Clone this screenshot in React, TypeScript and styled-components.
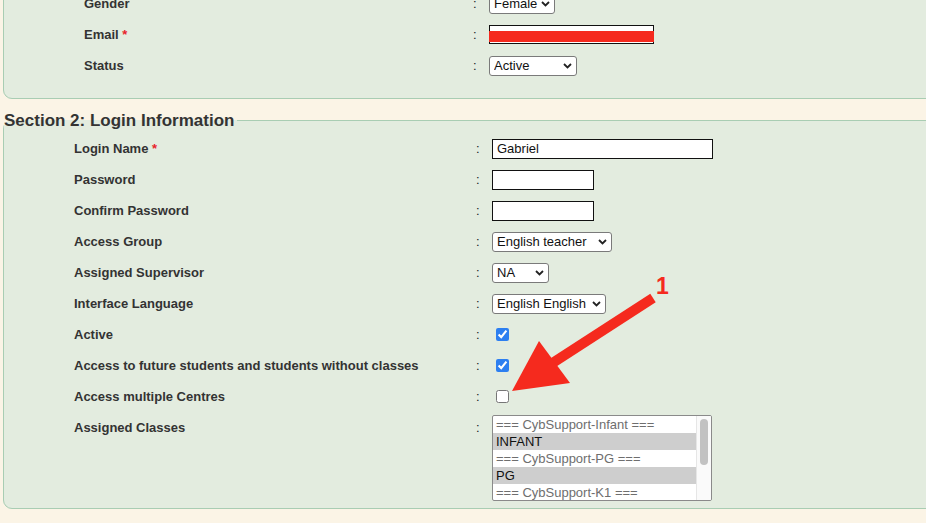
import React from 'react';
import styled, { createGlobalStyle } from 'styled-components';

const GlobalStyle = createGlobalStyle`
  html, body {
    margin: 0;
    padding: 0;
    background: #fbf4e6;
    overflow: hidden;
  }
  body {
    font-family: "Liberation Sans", Arial, Helvetica, sans-serif;
    font-size: 13px;
    color: #333;
  }
`;

const Page = styled.div`
  display: flow-root;
  position: relative;
  width: 926px;
  height: 523px;
  overflow: hidden;
`;

const Fieldset = styled.fieldset`
  margin: 0 -40px 0 3px;
  border: 1px solid #a9cdb3;
  border-radius: 9px;
  background: #e3ecdf;
  min-width: 0;
`;

const PersonalSection = styled(Fieldset)`
  margin-top: -13px;
  padding: 0 0 17px 0;
`;

const LoginSection = styled(Fieldset)`
  margin-top: 11px;
  padding: 2px 0 7px 0;
`;

const Legend = styled.legend`
  padding: 0 3px 0 0;
  font-size: 17px;
  line-height: 21px;
  font-weight: bold;
  color: #333;
`;

const FormGrid = styled.div<{ $indent: number; $labelWidth: number; $colonWidth: number }>`
  display: grid;
  grid-template-columns: ${(p) => p.$labelWidth}px ${(p) => p.$colonWidth}px 1fr;
  grid-auto-rows: minmax(31px, auto);
  align-items: center;
  padding-left: ${(p) => p.$indent}px;
`;

const Label = styled.div<{ $top?: boolean }>`
  font-weight: bold;
  color: #333;
  white-space: nowrap;
  align-self: ${(p) => (p.$top ? 'start' : 'center')};
  line-height: ${(p) => (p.$top ? '31px' : 'normal')};
`;

const Star = styled.span`
  color: #e8242b;
`;

const Colon = styled(Label)`
  font-weight: normal;
  color: #222;
`;

const Field = styled.div<{ $top?: boolean }>`
  display: flex;
  align-items: center;
  align-self: ${(p) => (p.$top ? 'start' : 'center')};
  margin-top: ${(p) => (p.$top ? '3px' : '0')};
`;

const TallRow = styled.div`
  display: contents;
`;

const TextInput = styled.input<{ $width: number }>`
  box-sizing: border-box;
  width: ${(p) => p.$width}px;
  height: 20px;
  margin: 0;
  padding: 0 4px;
  border: 1px solid #111;
  border-radius: 0;
  background: #fff;
  font-family: "Liberation Sans", Arial, sans-serif;
  font-size: 13px;
  color: #111;
  outline: none;
`;

const RedactWrap = styled.div`
  position: relative;
  display: inline-flex;
`;

const RedactBar = styled.div`
  position: absolute;
  left: 0;
  right: 0;
  top: 6px;
  height: 11px;
  background: #f52a1e;
`;

const SelectWrap = styled.div`
  position: relative;
  display: inline-flex;
`;

const NativeSelect = styled.select<{ $width: number }>`
  appearance: none;
  box-sizing: border-box;
  width: ${(p) => p.$width}px;
  height: 20px;
  margin: 0;
  padding: 0 16px 0 4px;
  border: 1px solid #7a7a7a;
  border-radius: 3px;
  background: #fff;
  font-family: "Liberation Sans", Arial, sans-serif;
  font-size: 13px;
  color: #111;
  outline: none;
`;

const Chevron = styled.svg`
  position: absolute;
  right: 5px;
  top: 7px;
  width: 9px;
  height: 6px;
  pointer-events: none;
`;

const Check = styled.input`
  width: 13px;
  height: 13px;
  margin: 0 0 0 4px;
  accent-color: #2d7ff0;
`;

const ListBox = styled.div`
  box-sizing: border-box;
  display: flex;
  width: 220px;
  height: 86px;
  border: 1px solid #8a8a8a;
  border-radius: 2px;
  background: #fff;
  overflow: hidden;
`;

const OptionList = styled.div`
  flex: 1;
  padding-top: 0;
`;

const ListOption = styled.div<{ $group?: boolean; $selected?: boolean }>`
  height: 17px;
  line-height: 17px;
  padding-left: 3px;
  font-size: 13px;
  white-space: nowrap;
  color: ${(p) => (p.$group ? '#6e6e6e' : '#111')};
  background: ${(p) => (p.$selected ? '#cecece' : 'transparent')};
`;

const ScrollTrack = styled.div`
  width: 14px;
  border-left: 1px solid #e6e6e6;
  background: #fafafa;
  display: flex;
  justify-content: center;
  padding-top: 3px;
`;

const ScrollThumb = styled.div`
  width: 8px;
  height: 46px;
  border-radius: 4px;
  background: #c2c2c2;
`;

const Overlay = styled.svg`
  position: absolute;
  left: 0;
  top: 0;
  width: 926px;
  height: 523px;
  pointer-events: none;
`;

const Marker = styled.div`
  position: absolute;
  left: 656px;
  top: 275px;
  font-size: 23px;
  line-height: 1;
  font-weight: bold;
  color: #f52a1e;
`;

const Select: React.FC<{ width: number; value: string; options: string[] }> = ({ width, value, options }) => (
  <SelectWrap>
    <NativeSelect $width={width} defaultValue={value}>
      {options.map((o) => (
        <option key={o}>{o}</option>
      ))}
    </NativeSelect>
    <Chevron viewBox="0 0 9 6">
      <path d="M1 1 L4.5 4.5 L8 1" fill="none" stroke="#222" strokeWidth="1.8" />
    </Chevron>
  </SelectWrap>
);

interface Row {
  label: string;
  required?: boolean;
  field: React.ReactNode;
}

const personalRows: Row[] = [
  { label: 'Gender', field: <Select width={66} value="Female" options={['Male', 'Female']} /> },
  {
    label: 'Email',
    required: true,
    field: (
      <RedactWrap>
        <TextInput $width={165} style={{ height: 19 }} />
        <RedactBar />
      </RedactWrap>
    ),
  },
  { label: 'Status', field: <Select width={88} value="Active" options={['Active', 'Inactive']} /> },
];

const loginRows: Row[] = [
  { label: 'Login Name', required: true, field: <TextInput $width={221} defaultValue="Gabriel" /> },
  { label: 'Password', field: <TextInput $width={102} type="password" /> },
  { label: 'Confirm Password', field: <TextInput $width={102} type="password" /> },
  {
    label: 'Access Group',
    field: <Select width={120} value="English teacher" options={['English teacher', 'Admin']} />,
  },
  { label: 'Assigned Supervisor', field: <Select width={57} value="NA" options={['NA']} /> },
  {
    label: 'Interface Language',
    field: <Select width={114} value="English English" options={['English English']} />,
  },
  { label: 'Active', field: <Check type="checkbox" defaultChecked /> },
  {
    label: 'Access to future students and students without classes',
    field: <Check type="checkbox" defaultChecked />,
  },
  { label: 'Access multiple Centres', field: <Check type="checkbox" /> },
];

const classes = [
  { text: '=== CybSupport-Infant ===', group: true },
  { text: 'INFANT', selected: true },
  { text: '=== CybSupport-PG ===', group: true },
  { text: 'PG', selected: true },
  { text: '=== CybSupport-K1 ===', group: true },
];

const renderRows = (rows: Row[]) =>
  rows.map((r) => (
    <React.Fragment key={r.label}>
      <Label>
        {r.label}
        {r.required && <Star> *</Star>}
      </Label>
      <Colon>:</Colon>
      <Field>{r.field}</Field>
    </React.Fragment>
  ));

const App: React.FC = () => {
  return (
    <Page>
      <GlobalStyle />
      <PersonalSection>
        <FormGrid $indent={80} $labelWidth={389} $colonWidth={16}>
          {renderRows(personalRows)}
        </FormGrid>
      </PersonalSection>

      <LoginSection>
        <Legend>Section 2: Login Information</Legend>
        <FormGrid $indent={70} $labelWidth={402} $colonWidth={16}>
          {renderRows(loginRows)}
          <TallRow>
            <Label $top>Assigned Classes</Label>
            <Colon $top>:</Colon>
            <Field $top>
              <ListBox>
                <OptionList>
                  {classes.map((c) => (
                    <ListOption key={c.text} $group={c.group} $selected={c.selected}>
                      {c.text}
                    </ListOption>
                  ))}
                </OptionList>
                <ScrollTrack>
                  <ScrollThumb />
                </ScrollTrack>
              </ListBox>
            </Field>
          </TallRow>
        </FormGrid>
      </LoginSection>

      <Overlay viewBox="0 0 926 523">
        <line x1="653" y1="298" x2="551" y2="364" stroke="#f52a1e" strokeWidth="10" />
        <polygon points="539,341 570,383 512,391" fill="#f52a1e" />
      </Overlay>
      <Marker>1</Marker>
    </Page>
  );
};

export default App;
